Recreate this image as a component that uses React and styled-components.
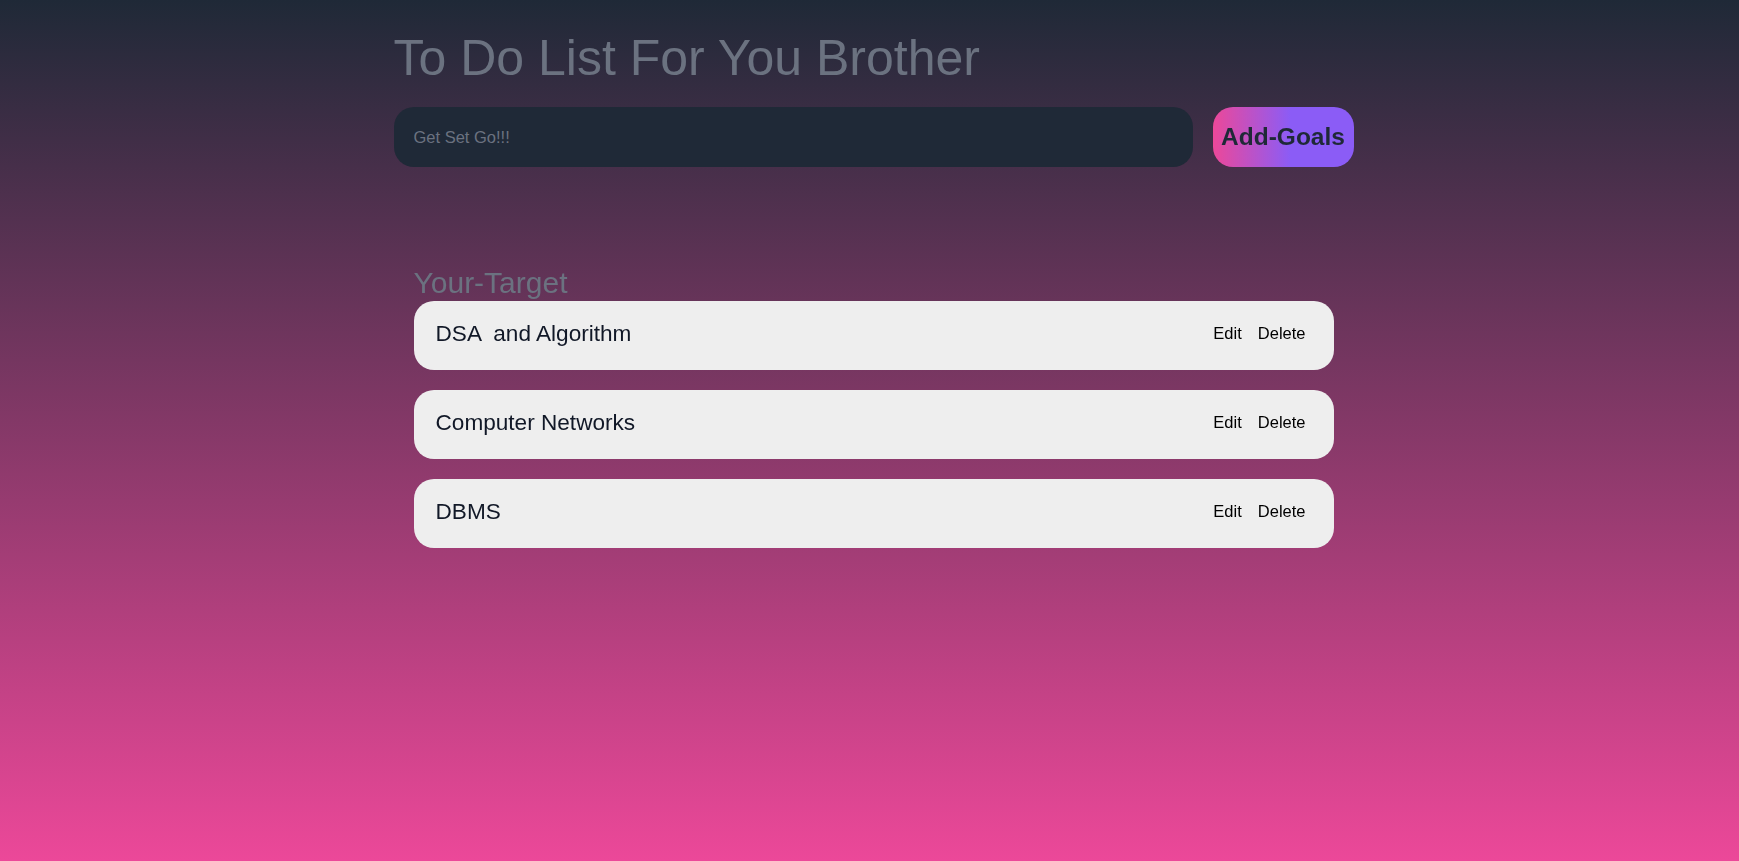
import { useState } from 'react'
import styled, { createGlobalStyle } from 'styled-components'

const GlobalStyle = createGlobalStyle`
  * {
    box-sizing: border-box;
  }
  body {
    margin: 0;
    font-family: "Liberation Sans", Arial, sans-serif;
  }
`

export default function App() {
  const [goal, setGoal] = useState('')
  const [todos] = useState([
    { id: 1, text: 'DSA  and Algorithm' },
    { id: 2, text: 'Computer Networks' },
    { id: 3, text: 'DBMS' },
  ])

  return (
    <Page>
      <GlobalStyle />
      <Container>
        <Title>To Do List For You Brother</Title>
        <Form onSubmit={e => e.preventDefault()}>
          <GoalInput
            autoFocus
            placeholder="Get Set Go!!!"
            value={goal}
            onChange={e => setGoal(e.target.value)}
          />
          <AddButton type="submit">Add-Goals</AddButton>
        </Form>
        <Targets>
          <TargetHeading>Your-Target</TargetHeading>
          <List>
            {todos.map(todo => (
              <Card key={todo.id}>
                <TodoText>{todo.text}</TodoText>
                <Actions>
                  <ActionButton>Edit</ActionButton>
                  <ActionButton>Delete</ActionButton>
                </Actions>
              </Card>
            ))}
          </List>
        </Targets>
      </Container>
    </Page>
  )
}

const Page = styled.div`
  min-height: 100vh;
  padding-left: 8px;
  background: linear-gradient(to bottom, #1f2937, #ec4899);
`

const Container = styled.div`
  width: 960px;
  margin: 0 auto;
  display: flex;
  flex-direction: column;
`

const Title = styled.h1`
  margin: 30px 0 0;
  font-size: 50px;
  line-height: 57px;
  font-weight: 400;
  color: #6b7280;
`

const Form = styled.form`
  display: flex;
  gap: 20px;
  margin-top: 20px;
`

const GoalInput = styled.input`
  width: 799px;
  height: 60px;
  padding: 0 20px;
  border: none;
  border-radius: 20px;
  outline: none;
  background: #1f2937;
  color: #e5e7eb;
  caret-color: #e5e7eb;
  font-family: inherit;
  font-size: 16.5px;

  &::placeholder {
    color: #6b7280;
  }
`

const AddButton = styled.button`
  width: 141px;
  height: 60px;
  padding: 0 6px;
  border: none;
  border-radius: 20px;
  background: linear-gradient(to right, #ec4899, #8b5cf6 55%);
  color: #1f2937;
  font-family: inherit;
  font-size: 24.5px;
  font-weight: 700;
  cursor: pointer;
`

const Targets = styled.section`
  width: 920px;
  margin: 99px auto 0;
`

const TargetHeading = styled.h2`
  margin: 0 0 1px;
  font-size: 30px;
  line-height: 34px;
  font-weight: 400;
  color: #6b7280;
`

const List = styled.div`
  display: flex;
  flex-direction: column;
  gap: 20px;
`

const Card = styled.div`
  height: 69px;
  display: flex;
  align-items: center;
  justify-content: space-between;
  padding: 0 20px 4px 22px;
  border-radius: 20px;
  background: #eeeeee;
`

const TodoText = styled.span`
  font-size: 22.6px;
  color: #111827;
  white-space: pre;
`

const Actions = styled.div`
  display: flex;
`

const ActionButton = styled.button`
  padding: 0 8px;
  border: none;
  background: transparent;
  color: #000;
  font-family: inherit;
  font-size: 16.5px;
  cursor: pointer;
`
